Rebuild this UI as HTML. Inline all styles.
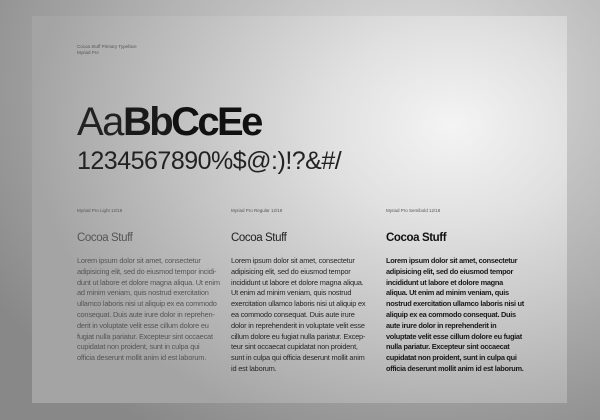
<!DOCTYPE html>
<html><head><style>
html,body{margin:0;padding:0;width:600px;height:420px;overflow:hidden}
body{background:radial-gradient(ellipse 500px 400px at 420px 90px,#e2e2e2 0%,#b2b2b2 55%,#888 100%);font-family:"Liberation Sans",sans-serif;position:relative}
.card{position:absolute;left:32px;top:16px;width:535px;height:387px;background:radial-gradient(ellipse 420px 330px at 420px 110px,#f4f4f4 0%,#e0e0e0 30%,#c2c2c2 65%,#a4a4a4 100%)}
.a{position:absolute;white-space:nowrap;color:#222}
.sm{font-size:4.5px;color:#555;line-height:6px}
.big{font-size:40px;line-height:40px;color:#1a1a1a}
.dig{font-size:25px;line-height:25px;letter-spacing:-0.5px;color:#222}
.h{font-size:11.5px;letter-spacing:-0.4px}
.b{font-size:7.4px;line-height:10.8px;letter-spacing:-0.2px}
.b div{white-space:nowrap}
</style></head><body>
<div class="card"></div>
<div class="a sm" style="left:77px;top:44px">Cocoa Stuff Primary Typeface<br>Myriad Pro</div>
<div class="a big" style="left:77px;top:102px"><span style="color:#222;letter-spacing:-1.5px">Aa</span><span style="font-weight:bold;letter-spacing:-2.6px">Bb</span><span style="font-weight:bold;letter-spacing:-2.6px;color:#111">CcEe</span></div>
<div class="a dig" style="left:77px;top:149px">1234567890%$@:)!?&amp;#/</div>
<div class="a sm" style="left:77px;top:208px">Myriad Pro Light 12/18</div>
<div class="a sm" style="left:231px;top:208px">Myriad Pro Regular 12/18</div>
<div class="a sm" style="left:386px;top:208px">Myriad Pro Semibold 12/18</div>
<div class="a h" style="left:77px;top:232px;color:#555">Cocoa Stuff</div>
<div class="a h" style="left:231px;top:232px;color:#222">Cocoa Stuff</div>
<div class="a h" style="left:386px;top:232px;color:#111;font-weight:bold">Cocoa Stuff</div>
<div class="a b" style="left:77px;top:256px;color:#555">
<div>Lorem ipsum dolor sit amet, consectetur</div><div>adipisicing elit, sed do eiusmod tempor incidi-</div><div>dunt ut labore et dolore magna aliqua. Ut enim</div><div>ad minim veniam, quis nostrud exercitation</div><div>ullamco laboris nisi ut aliquip ex ea commodo</div><div>consequat. Duis aute irure dolor in reprehen-</div><div>derit in voluptate velit esse cillum dolore eu</div><div>fugiat nulla pariatur. Excepteur sint occaecat</div><div>cupidatat non proident, sunt in culpa qui</div><div>officia deserunt mollit anim id est laborum.</div></div>
<div class="a b" style="left:231px;top:256px;color:#262626">
<div>Lorem ipsum dolor sit amet, consectetur</div><div>adipisicing elit, sed do eiusmod tempor</div><div>incididunt ut labore et dolore magna aliqua.</div><div>Ut enim ad minim veniam, quis nostrud</div><div>exercitation ullamco laboris nisi ut aliquip ex</div><div>ea commodo consequat. Duis aute irure</div><div>dolor in reprehenderit in voluptate velit esse</div><div>cillum dolore eu fugiat nulla pariatur. Excep-</div><div>teur sint occaecat cupidatat non proident,</div><div>sunt in culpa qui officia deserunt mollit anim</div><div>id est laborum.</div></div>
<div class="a b" style="left:386px;top:256px;color:#1a1a1a;font-weight:bold;letter-spacing:-0.3px">
<div>Lorem ipsum dolor sit amet, consectetur</div><div>adipisicing elit, sed do eiusmod tempor</div><div>incididunt ut labore et dolore magna</div><div>aliqua. Ut enim ad minim veniam, quis</div><div>nostrud exercitation ullamco laboris nisi ut</div><div>aliquip ex ea commodo consequat. Duis</div><div>aute irure dolor in reprehenderit in</div><div>voluptate velit esse cillum dolore eu fugiat</div><div>nulla pariatur. Excepteur sint occaecat</div><div>cupidatat non proident, sunt in culpa qui</div><div>officia deserunt mollit anim id est laborum.</div></div>
</body></html>
